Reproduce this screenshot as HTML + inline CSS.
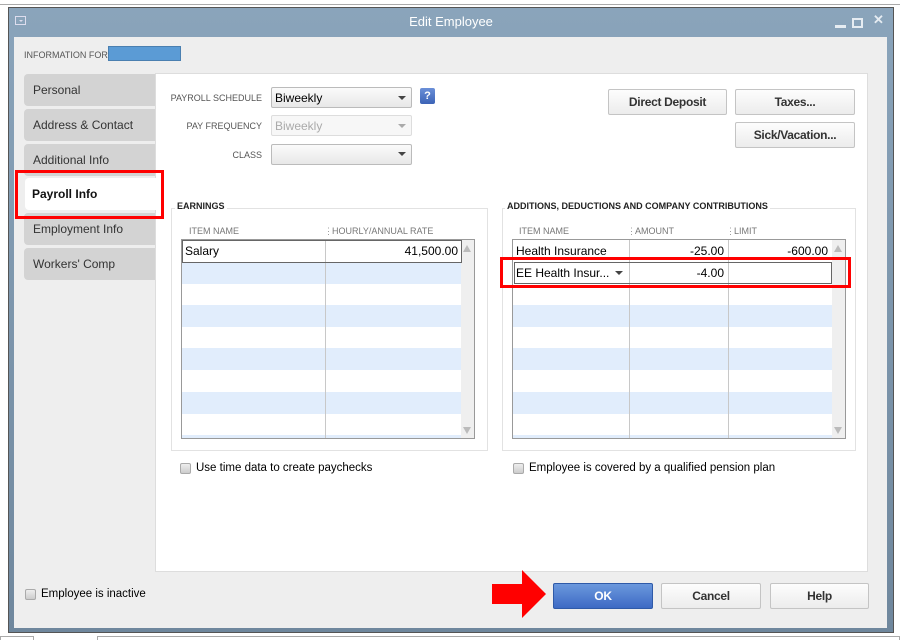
<!DOCTYPE html>
<html><head><style>
*{margin:0;padding:0;box-sizing:border-box}
body{width:900px;height:640px;background:#fff;font-family:"Liberation Sans",sans-serif;position:relative;overflow:hidden;font-size:11.5px;color:#000}
.a{position:absolute}
.win{left:8px;top:7px;width:886px;height:626px;background:linear-gradient(#8aa4bb,#6f879d);border:1px solid #555}
.title{left:0;top:0;width:100%;height:28px;color:#fff;font-size:13px;text-align:center;line-height:28px}
.body{left:5px;top:29px;width:873px;height:591px;background:#eeeeee}
.tab{left:24px;width:131px;height:32px;background:#d3d3d3;border-radius:4px 0 0 4px;font-size:12px;line-height:32px;padding-left:9px;color:#333}
.panel{left:155px;top:73px;width:713px;height:499px;background:#fff;border:1px solid #ddd}
.lbl{font-size:9px;color:#555;text-align:right}
.sel{height:21px;border:1px solid #bbb;border-radius:2px;background:linear-gradient(#fbfbfb,#e8e8e8);font-size:12px;padding:3px 3px}
.arr{width:0;height:0;border-left:4px solid transparent;border-right:4px solid transparent;border-top:4px solid #444}
.btn{height:26px;border:1px solid #c4c4c4;border-radius:2px;background:linear-gradient(#fdfdfd,#ececec);font-size:12px;font-weight:bold;text-align:center;line-height:24px;color:#333;letter-spacing:-0.3px}
.grp{border:1px solid #e2e2e2}
.gt{font-size:9px;font-weight:bold;color:#222;background:#fff;padding:0 2px}
.hd{font-size:9px;color:#777}
.tbl{border:1px solid #999;background:#fff;overflow:hidden}
.row{position:absolute;left:0;right:0;height:21.7px}
.b{background:#e1edfc}
.cb{width:11px;height:11px;border:1px solid #aaa;border-radius:2px;background:linear-gradient(#eee,#ccc)}
.red{border:3px solid #f00}
</style></head><body>
<div class="a" style="left:0;top:4px;width:900px;height:1px;background:#aaa"></div>
<div class="a win">
 <div class="a title">Edit Employee</div>
 <div class="a" style="left:6px;top:8px;width:11px;height:9px;border:1px solid #dde;"><div class="a" style="left:3px;top:3px;border-left:2px solid transparent;border-right:2px solid transparent;border-top:2px solid #dde"></div></div>
 <div class="a" style="left:826px;top:17px;width:11px;height:3px;background:#e6ecf2"></div>
 <div class="a" style="left:843px;top:10px;width:11px;height:10px;border:2px solid #e6ecf2"></div>
 <div class="a" style="left:864px;top:4px;color:#e6ecf2;font-size:13px;font-weight:bold;white-space:nowrap">✕</div>
 <div class="a body"></div>
</div>
<div class="a" style="left:24px;top:50px;font-size:9px;color:#555">INFORMATION FOR</div>
<div class="a" style="left:108px;top:46px;width:73px;height:15px;background:#5b9bd5;border:1px solid #4a7fb0"></div>

<div class="a tab" style="top:74px">Personal</div>
<div class="a tab" style="top:109px">Address &amp; Contact</div>
<div class="a tab" style="top:144px">Additional Info</div>
<div class="a tab" style="top:213px">Employment Info</div>
<div class="a tab" style="top:248px">Workers' Comp</div>

<div class="a panel"></div>
<div class="a tab" style="top:178px;background:#fff;font-weight:bold;color:#111;left:25px;width:131px;padding-left:7px">Payroll Info</div>
<div class="a red" style="left:15px;top:170px;width:149px;height:49px"></div>
<div class="a lbl" style="left:160px;top:93px;width:102px">PAYROLL SCHEDULE</div>
<div class="a sel" style="left:271px;top:87px;width:141px">Biweekly</div><div class="a arr" style="left:398px;top:96px"></div>
<div class="a" style="left:420px;top:88px;width:15px;height:16px;background:linear-gradient(#6a8fd8,#3c63b6);border-radius:2px;color:#fff;font-size:11px;font-weight:bold;text-align:center;line-height:16px">?</div>
<div class="a lbl" style="left:160px;top:121px;width:102px">PAY FREQUENCY</div>
<div class="a sel" style="left:271px;top:115px;width:141px;background:#f7f7f7;border-color:#ddd;color:#aaa">Biweekly</div><div class="a arr" style="left:398px;top:124px;border-top-color:#aaa"></div>
<div class="a lbl" style="left:160px;top:150px;width:102px">CLASS</div>
<div class="a sel" style="left:271px;top:144px;width:141px"></div><div class="a arr" style="left:398px;top:152px"></div>

<div class="a btn" style="left:608px;top:89px;width:119px">Direct Deposit</div>
<div class="a btn" style="left:735px;top:89px;width:120px">Taxes...</div>
<div class="a btn" style="left:735px;top:122px;width:120px">Sick/Vacation...</div>

<div class="a grp" style="left:171px;top:208px;width:317px;height:243px"></div>
<div class="a gt" style="left:175px;top:201px">EARNINGS</div>
<div class="a hd" style="left:189px;top:226px">ITEM NAME</div>
<div class="a hd" style="left:324px;top:226px;color:#999">⋮</div>
<div class="a hd" style="left:332px;top:226px">HOURLY/ANNUAL RATE</div>
<div class="a tbl" style="left:181px;top:239px;width:294px;height:200px">
 <div class="row" style="top:0"></div>
 <div class="row b" style="top:22px"></div><div class="row b" style="top:65px"></div><div class="row b" style="top:108px"></div><div class="row b" style="top:152px"></div><div class="row b" style="top:195px"></div>
 <div class="a" style="left:143px;top:0;width:1px;height:200px;background:#c8c8c8"></div>
 <div class="a" style="right:0;top:0;width:13px;height:200px;background:#efefef"></div>
 <div class="a" style="left:0;top:0;width:280px;height:23px;border:1px solid #666"></div>
 <div class="a" style="left:3px;top:4px;font-size:12px">Salary</div>
 <div class="a" style="left:200px;top:4px;width:76px;text-align:right;font-size:12px">41,500.00</div>
 <div class="a" style="right:3px;top:5px;border-left:4px solid transparent;border-right:4px solid transparent;border-bottom:7px solid #bbb"></div>
 <div class="a" style="right:3px;bottom:4px;border-left:4px solid transparent;border-right:4px solid transparent;border-top:7px solid #bbb"></div>
</div>

<div class="a grp" style="left:502px;top:208px;width:354px;height:243px"></div>
<div class="a gt" style="left:505px;top:201px">ADDITIONS, DEDUCTIONS AND COMPANY CONTRIBUTIONS</div>
<div class="a hd" style="left:519px;top:226px">ITEM NAME</div>
<div class="a hd" style="left:627px;top:226px;color:#999">⋮</div>
<div class="a hd" style="left:635px;top:226px">AMOUNT</div>
<div class="a hd" style="left:726px;top:226px;color:#999">⋮</div>
<div class="a hd" style="left:734px;top:226px">LIMIT</div>
<div class="a tbl" style="left:512px;top:239px;width:334px;height:200px">
 <div class="row b" style="top:65px"></div><div class="row b" style="top:108px"></div><div class="row b" style="top:152px"></div><div class="row b" style="top:195px"></div>
 <div class="a" style="left:116px;top:0;width:1px;height:200px;background:#c8c8c8"></div>
 <div class="a" style="left:215px;top:0;width:1px;height:200px;background:#c8c8c8"></div>
 <div class="a" style="right:0;top:0;width:13px;height:200px;background:#efefef"></div>
 <div class="a" style="left:3px;top:4px;font-size:12px">Health Insurance</div>
 <div class="a" style="left:120px;top:4px;width:91px;text-align:right;font-size:12px">-25.00</div>
 <div class="a" style="left:220px;top:4px;width:95px;text-align:right;font-size:12px">-600.00</div>
 <div class="a" style="left:1px;top:22px;width:318px;height:22px;border:1px solid #666"></div>
 <div class="a" style="left:3px;top:26px;font-size:12px">EE Health Insur...</div>
 <div class="a arr" style="left:102px;top:31px"></div>
 <div class="a" style="left:120px;top:26px;width:91px;text-align:right;font-size:12px">-4.00</div>
 <div class="a" style="right:3px;top:5px;border-left:4px solid transparent;border-right:4px solid transparent;border-bottom:7px solid #bbb"></div>
 <div class="a" style="right:3px;bottom:4px;border-left:4px solid transparent;border-right:4px solid transparent;border-top:7px solid #bbb"></div>
</div>
<div class="a red" style="left:500px;top:257px;width:351px;height:31px"></div>

<div class="a cb" style="left:180px;top:463px"></div>
<div class="a" style="left:196px;top:462px">Use time data to create paychecks</div>
<div class="a cb" style="left:513px;top:463px"></div>
<div class="a" style="left:529px;top:462px">Employee is covered by a qualified pension plan</div>

<div class="a cb" style="left:25px;top:589px"></div>
<div class="a" style="left:41px;top:588px">Employee is inactive</div>

<svg class="a" style="left:492px;top:570px" width="60" height="48"><polygon points="0,14 30,14 30,0 54,24 30,48 30,34 0,34" fill="#f00"/></svg>
<div class="a btn" style="left:553px;top:583px;width:100px;background:linear-gradient(#6b98dd,#3d6ac4);border-color:#2f5aa8;color:#fff">OK</div>
<div class="a btn" style="left:661px;top:583px;width:100px">Cancel</div>
<div class="a btn" style="left:770px;top:583px;width:99px">Help</div>

<div class="a" style="left:0;top:636px;width:34px;height:4px;border:1px solid #aaa;border-bottom:0"></div>
<div class="a" style="left:97px;top:636px;width:803px;height:4px;border:1px solid #aaa;border-bottom:0"></div>
</body></html>
